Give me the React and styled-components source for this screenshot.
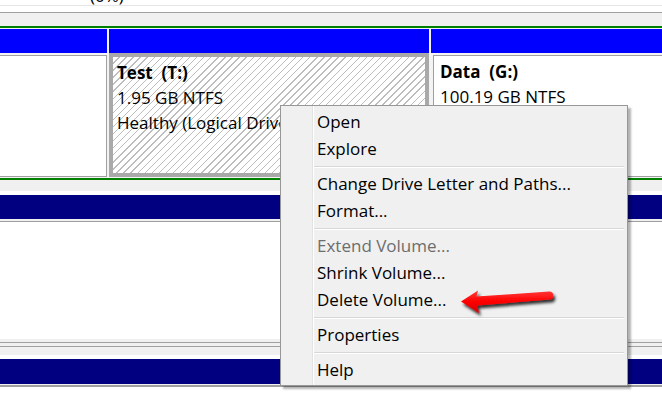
import React from "react";
import styled, { createGlobalStyle } from "styled-components";

const Global = createGlobalStyle`
  html, body { margin: 0; padding: 0; background: #fff; }
  #root { width: 662px; height: 416px; }
`;

const FONT = `"Open Sans", "Noto Sans", "DejaVu Sans", sans-serif`;

const Page = styled.div`
  position: relative;
  width: 662px;
  height: 416px;
  overflow: hidden;
  background: #fff;
  font-family: ${FONT};
  color: #000;
`;

const TopStrip = styled.div`
  height: 12px;
  overflow: hidden;
  padding-left: 90px;
  background: linear-gradient(#fff 0 5px, #e6e6e6 5px 6px, #fff 6px);
`;

const Caption = styled.div`
  margin-top: -14px;
  font-size: 17px;
  line-height: 20px;
`;

const Band = styled.div`
  height: ${(p) => p.$h}px;
  background: ${(p) => p.$c};
`;

const DiskGrid = styled.div`
  display: grid;
  grid-template-columns: 107px 320px 1fr;
  column-gap: 2px;
  height: ${(p) => p.$h}px;
  background: #f3f3f3;
`;

const HeaderCell = styled.div`
  background: #0000ff;
`;

const VolumeText = styled.div`
  font-size: 17px;
  line-height: 25px;
  white-space: pre;
`;

const VolumeName = styled.div`
  font-weight: 700;
`;

const EmptyBox = styled.div`
  margin-top: 2px;
  height: 122px;
  box-sizing: border-box;
  background: #fff;
  border: 1px solid #a0a0a0;
  border-left: none;
`;

const SelectedBox = styled(VolumeText)`
  height: 124px;
  box-sizing: border-box;
  border: 4px solid #a9a9a9;
  padding: 3px 0 0 4px;
  overflow: hidden;
  background: repeating-linear-gradient(135deg, #fff 0 4px, #bdbdbd 4px 5px);
`;

const DataBox = styled(VolumeText)`
  margin: 2px 0 0 2px;
  height: 122px;
  box-sizing: border-box;
  border: 1px solid #a0a0a0;
  border-right: none;
  padding: 3px 0 0 6px;
  overflow: hidden;
  background: #fff;
`;

const Menu = styled.div`
  position: absolute;
  left: 280px;
  top: 105px;
  width: 348px;
  box-sizing: border-box;
  border: 1px solid #979797;
  padding: 2px 0;
  background: linear-gradient(
    to right,
    #f0f0f0 0 31px,
    #e2e3e3 31px 32px,
    #ffffff 32px 33px,
    #f0f0f0 33px
  );
  box-shadow: 3px 3px 2px rgba(0, 0, 0, 0.3);
  font-size: 17px;
`;

const Item = styled.div`
  height: 27px;
  box-sizing: border-box;
  padding: 1px 0 0 36px;
  line-height: 26px;
  white-space: nowrap;
  color: ${(p) => (p.$disabled ? "#6d6d6d" : "#000")};
`;

const Separator = styled.div`
  height: 8px;
  margin: 0 3px 0 33px;
  background: linear-gradient(
    transparent 0 4px,
    #d7d7d7 4px 5px,
    #ffffff 5px 6px,
    transparent 6px
  );
`;

const Arrow = styled.svg`
  position: absolute;
  left: 452px;
  top: 282px;
  width: 110px;
  height: 40px;
  overflow: visible;
`;

const menu = [
  ["Open"],
  ["Explore"],
  null,
  ["Change Drive Letter and Paths..."],
  ["Format..."],
  null,
  ["Extend Volume...", true],
  ["Shrink Volume..."],
  ["Delete Volume..."],
  null,
  ["Properties"],
  null,
  ["Help"],
];

export default function App() {
  return (
    <Page>
      <Global />
      <TopStrip>
        <Caption>(0%)</Caption>
      </TopStrip>
      <Band $h={1} $c="#a0a0a0" />
      <Band $h={13} $c="#f0f0f0" />
      <Band $h={2} $c="#008000" />
      <Band $h={1} $c="#f3f3f3" />
      <DiskGrid $h={24}>
        <HeaderCell />
        <HeaderCell />
        <HeaderCell />
      </DiskGrid>
      <DiskGrid $h={125}>
        <EmptyBox />
        <SelectedBox>
          <VolumeName>{"Test  (T:)"}</VolumeName>
          <div>1.95 GB NTFS</div>
          <div>Healthy (Logical Drive)</div>
        </SelectedBox>
        <DataBox>
          <VolumeName>{"Data  (G:)"}</VolumeName>
          <div>100.19 GB NTFS</div>
          <div>Healthy (Logical Drive)</div>
        </DataBox>
      </DiskGrid>
      <Band $h={2} $c="#008000" />
      <Band $h={11} $c="#f0f0f0" />
      <Band $h={4} $c="#fff" />
      <Band $h={24} $c="#000080" />
      <Band $h={2} $c="#f0f0f0" />
      <Band $h={1} $c="#a0a0a0" />
      <Band $h={117} $c="#fff" />
      <Band $h={3} $c="#f0f0f0" />
      <Band $h={1} $c="#a0a0a0" />
      <Band $h={3} $c="#f0f0f0" />
      <Band $h={1} $c="#a0a0a0" />
      <Band $h={8} $c="#f0f0f0" />
      <Band $h={4} $c="#fff" />
      <Band $h={25} $c="#000080" />
      <Band $h={1} $c="#f0f0f0" />
      <Band $h={2} $c="#a0a0a0" />

      <Menu>
        {menu.map((m, i) =>
          m ? (
            <Item key={i} $disabled={m[1]}>
              {m[0]}
            </Item>
          ) : (
            <Separator key={i} />
          )
        )}
      </Menu>

      <Arrow viewBox="0 0 110 40">
        <defs>
          <linearGradient id="red" x1="0" y1="0" x2="0" y2="1">
            <stop offset="0" stopColor="#ff3a3a" />
            <stop offset="0.5" stopColor="#ff0000" />
            <stop offset="1" stopColor="#d40000" />
          </linearGradient>
          <filter id="sh" x="-20%" y="-50%" width="140%" height="200%">
            <feDropShadow dx="2" dy="3" stdDeviation="1.4" floodColor="#000" floodOpacity="0.8" />
          </filter>
        </defs>
        <path
          d="M9 19.5 L26 8.5 L24.5 14.5 L97 9.5 A4 4 0 0 1 97.5 17.5 L25 23.5 L27 31 Z"
          fill="url(#red)"
          filter="url(#sh)"
        />
      </Arrow>
    </Page>
  );
}
